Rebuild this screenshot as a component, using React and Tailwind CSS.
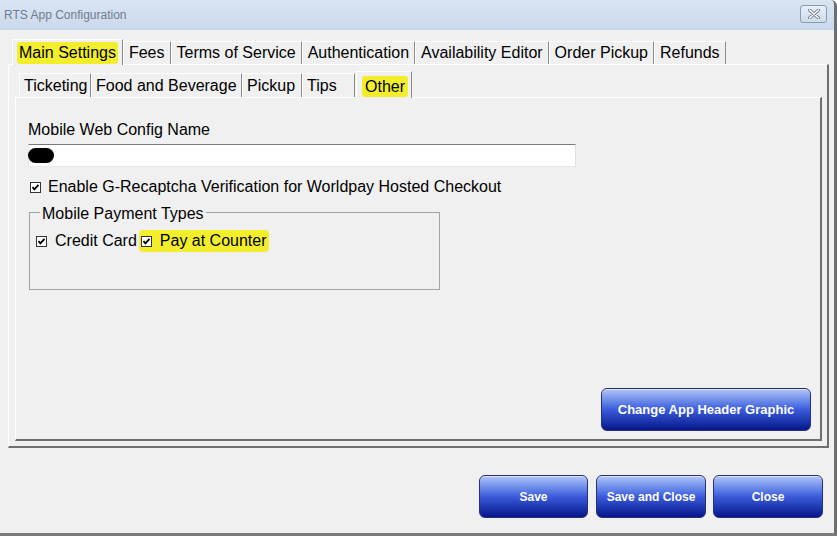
import React from 'react';

const font = { fontFamily: '"Liberation Sans", Arial, sans-serif' };

const CheckBox = () => (
    <svg width="11" height="11" viewBox="0 0 11 11" className="shrink-0">
        <rect x="0.5" y="0.5" width="10" height="10" fill="#ffffff" stroke="#333333" />
        <path d="M2.5 5.2 L4.4 7.4 L8.5 2.8" fill="none" stroke="#000000" strokeWidth="1.8" />
    </svg>
);

const OuterTab = ({ label, active }) => (
    <div
        className={
            active
                ? 'h-[26px] px-[4px] flex items-start pt-[2px] border-l border-t border-white border-r border-r-[#8c8c8c] bg-[#f0f0f0] relative z-10 mb-[-1px]'
                : 'h-[23px] px-[5px] flex items-center border-l border-t border-white border-r border-r-[#8c8c8c] bg-[#f0f0f0]'
        }
    >
        <span className={active ? 'bg-[#f2ee2c] rounded-[3px] px-[2px] leading-[22px]' : 'leading-[22px]'}>{label}</span>
    </div>
);

const InnerTab = ({ label, active, width }) => (
    <div
        style={{ width }}
        className={
            active
                ? 'h-[27px] ml-[1px] px-[5px] flex items-start pt-[3px] border-l border-t border-white border-r border-r-[#8c8c8c] bg-[#f0f0f0] relative z-10 mb-[-1px]'
                : 'h-[24px] px-[4px] flex items-center border-l border-t border-white border-r border-r-[#8c8c8c] bg-[#f0f0f0]'
        }
    >
        <span className={active ? 'bg-[#f2ee2c] rounded-[3px] px-[3px] leading-[21px] mt-[1px]' : 'leading-[22px]'}>{label}</span>
    </div>
);

const BlueButton = ({ children, className }) => (
    <button
        className={
            'rounded-[6px] border border-[#26307a] bg-linear-to-b from-[#b3c4f7] via-[#3c5bdc] to-[#08148a] text-white font-bold shadow-[inset_0_1px_0_rgba(255,255,255,0.6)] ' +
            className
        }
    >
        {children}
    </button>
);

const App = () => {
    const outerTabs = ['Main Settings', 'Fees', 'Terms of Service', 'Authentication', 'Availability Editor', 'Order Pickup', 'Refunds'];
    const innerTabs = [
        { label: 'Ticketing', width: 72 },
        { label: 'Food and Beverage', width: 151 },
        { label: 'Pickup', width: 60 },
        { label: 'Tips', width: 53 },
        { label: 'Other', width: 56 },
    ];

    return (
        <div style={font} className="w-[837px] h-[536px] bg-[#f0f0f0] text-black overflow-hidden flex flex-col border-r-[3px] border-r-[#6e6e6e] border-b-[3px] border-b-[#7a7a7a] rounded-tr-[6px]">
            {/* title bar */}
            <div className="h-[30px] shrink-0 bg-linear-to-b from-[#dae5f2] to-[#c9d9ec] flex items-start justify-between pl-[4px] pr-[7px]">
                <span className="text-[12px] text-[#6f7c8c] leading-[30px]">RTS App Configuration</span>
                <div className="mt-[5px] w-[27px] h-[18px] rounded-[3px] border border-[#8a9bb0] bg-linear-to-b from-[#e6eef8] to-[#cfdcec] flex items-center justify-center">
                    <svg width="12" height="10" viewBox="0 0 12 10">
                        <path d="M1.5 1 L10.5 9 M10.5 1 L1.5 9" stroke="#6b7a8c" strokeWidth="3.2" strokeLinecap="round" />
                        <path d="M1.5 1 L10.5 9 M10.5 1 L1.5 9" stroke="#ffffff" strokeWidth="1.6" strokeLinecap="round" />
                    </svg>
                </div>
            </div>

            <div className="flex-1 flex flex-col px-[8px] pt-[8px]">
                {/* outer tabs */}
                <div className="h-[26px] flex items-end pl-[4px] text-[16px]">
                    {outerTabs.map((t, i) => (
                        <OuterTab key={t} label={t} active={i === 0} />
                    ))}
                </div>

                {/* outer panel */}
                <div className="w-[821px] h-[384px] border-l border-t border-white border-r-2 border-r-[#6f6f6f] border-b-2 border-b-[#6f6f6f] flex flex-col pl-[6px] pr-[5px] pt-[5px] pb-[5px]">
                    <div className="h-[27px] flex items-end pl-[4px] text-[16px]">
                        {innerTabs.map((t, i) => (
                            <InnerTab key={t.label} label={t.label} width={t.width} active={i === 4} />
                        ))}
                    </div>

                    {/* inner panel */}
                    <div className="flex-1 border-l border-t border-white border-r-2 border-r-[#6f6f6f] border-b-2 border-b-[#6f6f6f] flex flex-col pl-[12px] pt-[22px] pr-[9px] pb-[8px] text-[16px]">
                        <div className="leading-[20px]">Mobile Web Config Name</div>
                        <div className="mt-[4px] w-[548px] h-[23px] bg-white border-t border-t-[#7a7a7a] border-l border-l-[#e8e8e8] border-r border-r-[#e0e0e0] border-b border-b-[#e8e8e8] flex items-center">
                            <div className="w-[26px] h-[15px] bg-black rounded-full ml-[-1px]" />
                        </div>
                        <div className="mt-[10px] flex items-center gap-[7px] pl-[2px] leading-[20px]">
                            <CheckBox />
                            <span>Enable G-Recaptcha Verification for Worldpay Hosted Checkout</span>
                        </div>

                        <fieldset className="mt-[3px] ml-[1px] w-[411px] h-[90px] border border-[#a3a3a3] px-[6px]">
                            <legend className="ml-[4px] px-[2px] pt-[4px] leading-[20px]">Mobile Payment Types</legend>
                            <div className="flex items-center mt-[6px] leading-[20px]">
                                <CheckBox />
                                <span className="ml-[8px]">Credit Card</span>
                                <div className="ml-[2px] flex items-center gap-[8px] bg-[#f2ee2c] rounded-[4px] pl-[2px] pr-[2px] h-[22px]">
                                    <CheckBox />
                                    <span>Pay at Counter</span>
                                </div>
                            </div>
                        </fieldset>

                        <div className="flex-1" />
                        <div className="flex justify-end">
                            <BlueButton className="w-[210px] h-[43px] text-[13px]">Change App Header Graphic</BlueButton>
                        </div>
                    </div>
                </div>

                {/* bottom buttons */}
                <div className="flex justify-end mt-[27px] pr-[3px]">
                    <BlueButton className="w-[109px] h-[43px] text-[12px]">Save</BlueButton>
                    <BlueButton className="ml-[8px] w-[110px] h-[43px] text-[12px]">Save and Close</BlueButton>
                    <BlueButton className="ml-[7px] w-[110px] h-[43px] text-[12px]">Close</BlueButton>
                </div>
            </div>
        </div>
    );
};

export default App;
